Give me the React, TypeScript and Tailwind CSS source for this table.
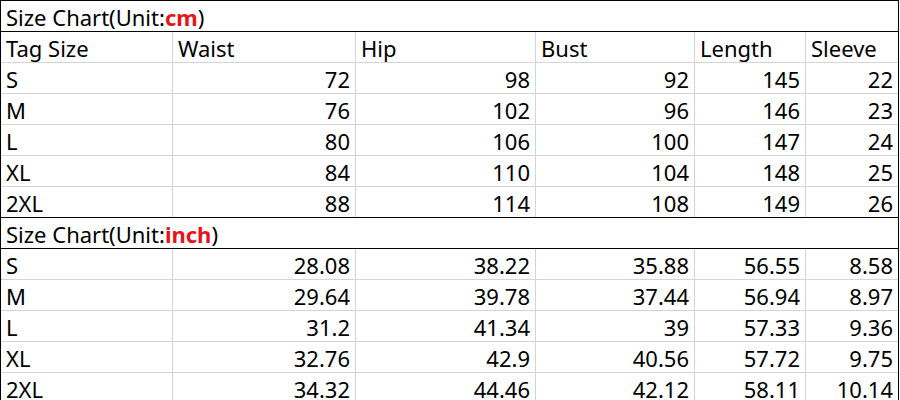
import React from 'react';

const widths = ['w-[172px]', 'w-[183px]', 'w-[180px]', 'w-[159px]', 'w-[111px]', 'flex-1'];

const cmRows = [
  ['S', '72', '98', '92', '145', '22'],
  ['M', '76', '102', '96', '146', '23'],
  ['L', '80', '106', '100', '147', '24'],
  ['XL', '84', '110', '104', '148', '25'],
  ['2XL', '88', '114', '108', '149', '26'],
];

const inchRows = [
  ['S', '28.08', '38.22', '35.88', '56.55', '8.58'],
  ['M', '29.64', '39.78', '37.44', '56.94', '8.97'],
  ['L', '31.2', '41.34', '39', '57.33', '9.36'],
  ['XL', '32.76', '42.9', '40.56', '57.72', '9.75'],
  ['2XL', '34.32', '44.46', '42.12', '58.11', '10.14'],
];

const Row = ({ cells, header, last }: { cells: string[]; header?: boolean; last?: boolean }) => (
  <div className={`flex h-[31px] border-b ${last ? 'border-black' : 'border-[#d4d4d4]'}`}>
    {cells.map((c, i) => (
      <div
        key={i}
        className={`${widths[i]} flex items-end pb-[1px] px-[5px] ${i < 5 ? 'border-r border-[#d4d4d4]' : ''} ${
          !header && i > 0 ? 'justify-end' : 'justify-start'
        }`}
      >
        {c}
      </div>
    ))}
  </div>
);

const Title = ({ unit }: { unit: string }) => (
  <div className="flex h-[31px] items-end border-b border-black px-[5px] pb-[1px]">
    Size Chart(Unit:<span className="font-bold text-[#e8141a]">{unit}</span>)
  </div>
);

const App = () => {
  return (
    <div className="w-[900px] h-[400px] overflow-hidden bg-white">
      <div
        className="w-[899px] border-l border-r border-t border-black text-[22px] leading-[26px] text-black"
        style={{ fontFamily: '"Noto Sans", "Noto Sans CJK SC", sans-serif' }}
      >
        <Title unit="cm" />
        <Row cells={['Tag Size', 'Waist', 'Hip', 'Bust', 'Length', 'Sleeve']} header />
        {cmRows.map((r, i) => (
          <Row key={r[0]} cells={r} last={i === cmRows.length - 1} />
        ))}
        <Title unit="inch" />
        {inchRows.map((r) => (
          <Row key={r[0]} cells={r} />
        ))}
      </div>
    </div>
  );
};

export default App;
